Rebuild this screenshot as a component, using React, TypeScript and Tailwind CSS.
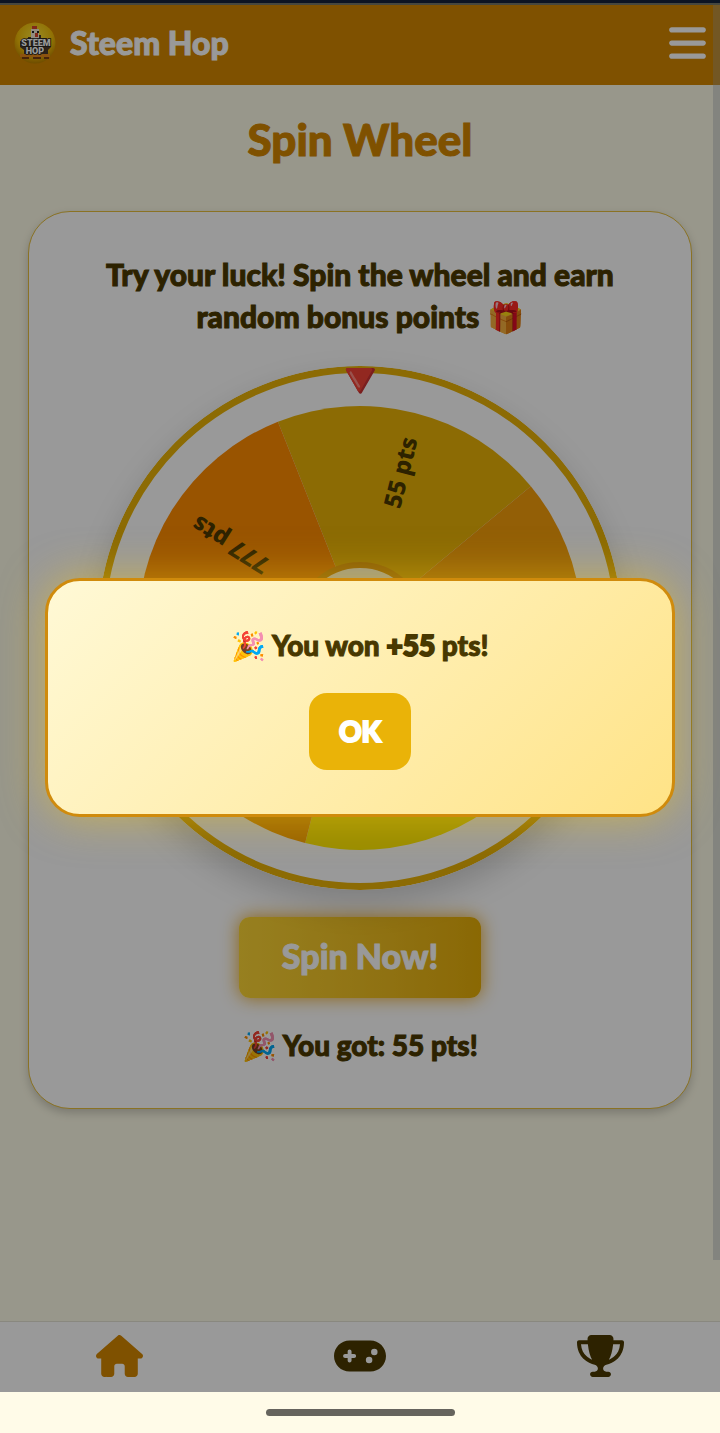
import { FaBars, FaGamepad, FaHouse, FaTrophy } from "react-icons/fa6";

const SEGMENTS = [
  { start: -21.7, color: "#eab308", label: "55 pts" },
  { start: 50.3, color: "#f59e0b", label: "10 pts" },
  { start: 122.3, color: "#ffea00", label: "100 pts" },
  { start: 194.3, color: "#ffa500", label: "25 pts" },
  { start: 266.3, color: "#ff8c00", label: "777 pts" },
];

const SWEEP = 72;
const CENTER = 262;
const RADIUS = 222;

function point(angle: number, r: number) {
  const rad = (angle * Math.PI) / 180;
  return [CENTER + r * Math.sin(rad), CENTER - r * Math.cos(rad)];
}

function slicePath(start: number) {
  const [x1, y1] = point(start, RADIUS);
  const [x2, y2] = point(start + SWEEP, RADIUS);
  return `M${CENTER} ${CENTER} L${x1} ${y1} A${RADIUS} ${RADIUS} 0 0 1 ${x2} ${y2} Z`;
}

function Logo() {
  return (
    <svg viewBox="0 0 42 42" className="size-[42px]" aria-hidden="true">
      <defs>
        <radialGradient id="sun" cx="50%" cy="35%" r="65%">
          <stop offset="0" stopColor="#ffe83a" />
          <stop offset="0.65" stopColor="#f2bd08" />
          <stop offset="1" stopColor="#b98000" />
        </radialGradient>
      </defs>
      <circle cx="21" cy="21" r="20.5" fill="url(#sun)" />
      <path d="M6 19h8v-4h3v-2h10v3h6v2h4v7l-3 3v5H10v-5l-4-3z" fill="#4b3a2a" />
      <path d="M17 7h8v10h-8z" fill="#f4ead4" />
      <path d="M18 4h5v3h-5zM21 11h3v4h-3z" fill="#d8432b" />
      <path d="M18 9h2v2h-2zM23 9h2v2h-2z" fill="#222" />
      <path d="M6 32h30v3H6z" fill="#e98a1a" />
      <path d="M8 35h7v2H8zM19 35h8v2h-8zM30 35h5v2h-5z" fill="#7a3c12" />
      <g
        fontFamily="Roboto, sans-serif"
        fontWeight="900"
        fill="#fff"
        stroke="#26231f"
        strokeWidth="1.6"
        paintOrder="stroke"
        textAnchor="middle"
      >
        <text x="22" y="24" fontSize="9">STEEM</text>
        <text x="21" y="32" fontSize="9">HOP</text>
      </g>
    </svg>
  );
}

function Wheel() {
  return (
    <div className="relative mt-[29px] w-full max-w-[524px]">
      <svg
        viewBox="0 0 524 524"
        className="block w-full rounded-full shadow-[0_14px_32px_rgba(0,0,0,0.18)]"
        role="img"
        aria-label="Prize wheel"
      >
        <circle cx={CENTER} cy={CENTER} r="258.5" fill="#fff" stroke="#eab308" strokeWidth="7" />
        {SEGMENTS.map((s) => (
          <path key={s.label} d={slicePath(s.start)} fill={s.color} />
        ))}
        {SEGMENTS.map((s) => {
          const mid = s.start + SWEEP / 2;
          const [x, y] = point(mid, 197);
          return (
            <text
              key={s.label}
              x={x}
              y={y}
              transform={`rotate(${mid - 90} ${x} ${y})`}
              textAnchor="end"
              dominantBaseline="central"
              fontFamily="Noto Sans, sans-serif"
              fontWeight="800"
              fontSize="24"
              fill="#4b3a00"
            >
              {s.label}
            </text>
          );
        })}
        <circle cx={CENTER} cy={CENTER} r="63" fill="#fffbe6" stroke="#e0970b" strokeWidth="6" />
      </svg>
      <span className="absolute top-0 left-1/2 -translate-x-1/2 text-[50px] leading-[26px]">🔻</span>
    </div>
  );
}

function WinDialog() {
  return (
    <div className="absolute inset-0 flex items-center justify-center bg-black/40 px-[45px]">
      <div
        role="dialog"
        aria-modal="true"
        aria-labelledby="win-text"
        className="flex w-full flex-col items-center rounded-[35px] border-[3px] border-[#d08b0c] bg-linear-135 from-[#fff9d6] to-[#ffe386] px-10 pt-[43px] pb-11 shadow-[0_0_44px_rgba(250,204,21,0.5)]"
      >
        <p
          id="win-text"
          className="text-[28px] leading-[42px] font-black text-[#483800] [-webkit-text-stroke:1px_#483800]"
        >
          🎉 You won <strong className="[-webkit-text-stroke:2px_#483800]">+55</strong> pts!
        </p>
        <button className="mt-[27px] h-[77px] w-[102px] rounded-[18px] bg-[#eab308] pb-0.5 text-[28px] font-black text-white [-webkit-text-stroke:2px_#fff]">
          OK
        </button>
      </div>
    </div>
  );
}

export default function App() {
  return (
    <div className="flex min-h-screen flex-col bg-[#0c1423] pt-[3px] font-[Lato,'Noto_Sans',sans-serif] text-[#4b3a00]">
      <div className="relative flex flex-1 flex-col bg-[#fefce8]">
        <header className="flex h-[82px] items-center justify-between border-t-2 border-[#76776a] bg-[#d48700] px-[14px] pb-1">
          <div className="flex items-center gap-[14px]">
            <Logo />
            <span className="text-[32px] leading-10 font-black text-white [-webkit-text-stroke:1px_#fff]">
              Steem Hop
            </span>
          </div>
          <button aria-label="Open menu" className="text-white">
            <FaBars className="h-[42px] w-[37px]" />
          </button>
        </header>

        <main className="flex flex-1 flex-col items-center px-7 pt-[26px]">
          <h1 className="text-[44px] leading-[56px] font-black text-[#d48700] [-webkit-text-stroke:1px_#d48700]">
            Spin Wheel
          </h1>
          <section className="mt-11 flex w-full flex-col items-center rounded-[42px] border border-[#e6be3c] bg-white px-10 pt-[41px] pb-[42px] shadow-[0_4px_10px_rgba(0,0,0,0.2)]">
            <p className="max-w-[540px] text-center text-[30px] leading-[42px] font-black [-webkit-text-stroke:1px_#4b3a00]">
              Try your luck! Spin the wheel and earn random bonus points 🎁
            </p>
            <Wheel />
            <button className="mt-[27px] h-[81px] w-[242px] rounded-[11px] bg-linear-to-r from-[#fcd535] to-[#e6ae06] pb-1 text-[34px] font-black text-white shadow-[0_0_18px_rgba(234,160,8,0.9)] [-webkit-text-stroke:1px_#fff]">
              Spin Now!
            </button>
            <p className="mt-[26px] text-[28px] leading-[42px] font-black [-webkit-text-stroke:1px_#4b3a00]">
              🎉 You got: 55 pts!
            </p>
          </section>
        </main>

        <nav className="flex h-[71px] items-center justify-around border-t border-[#e5e3d4] bg-white pb-0.5">
          <a href="#home" aria-label="Home" className="text-[#d48700]">
            <FaHouse className="h-[42px] w-[47px]" />
          </a>
          <a href="#games" aria-label="Games">
            <FaGamepad className="h-[42px] w-[52px]" />
          </a>
          <a href="#leaderboard" aria-label="Leaderboard">
            <FaTrophy className="h-[42px] w-[47px]" />
          </a>
        </nav>

        <div className="absolute top-0.5 right-0 bottom-[132px] w-[7px] bg-[#9ca3af]/35" />
        <WinDialog />
      </div>
      <div className="flex h-[41px] items-center justify-center bg-[#fffbe8]">
        <div className="h-[7px] w-[189px] rounded-full bg-[#66645d]" />
      </div>
    </div>
  );
}
